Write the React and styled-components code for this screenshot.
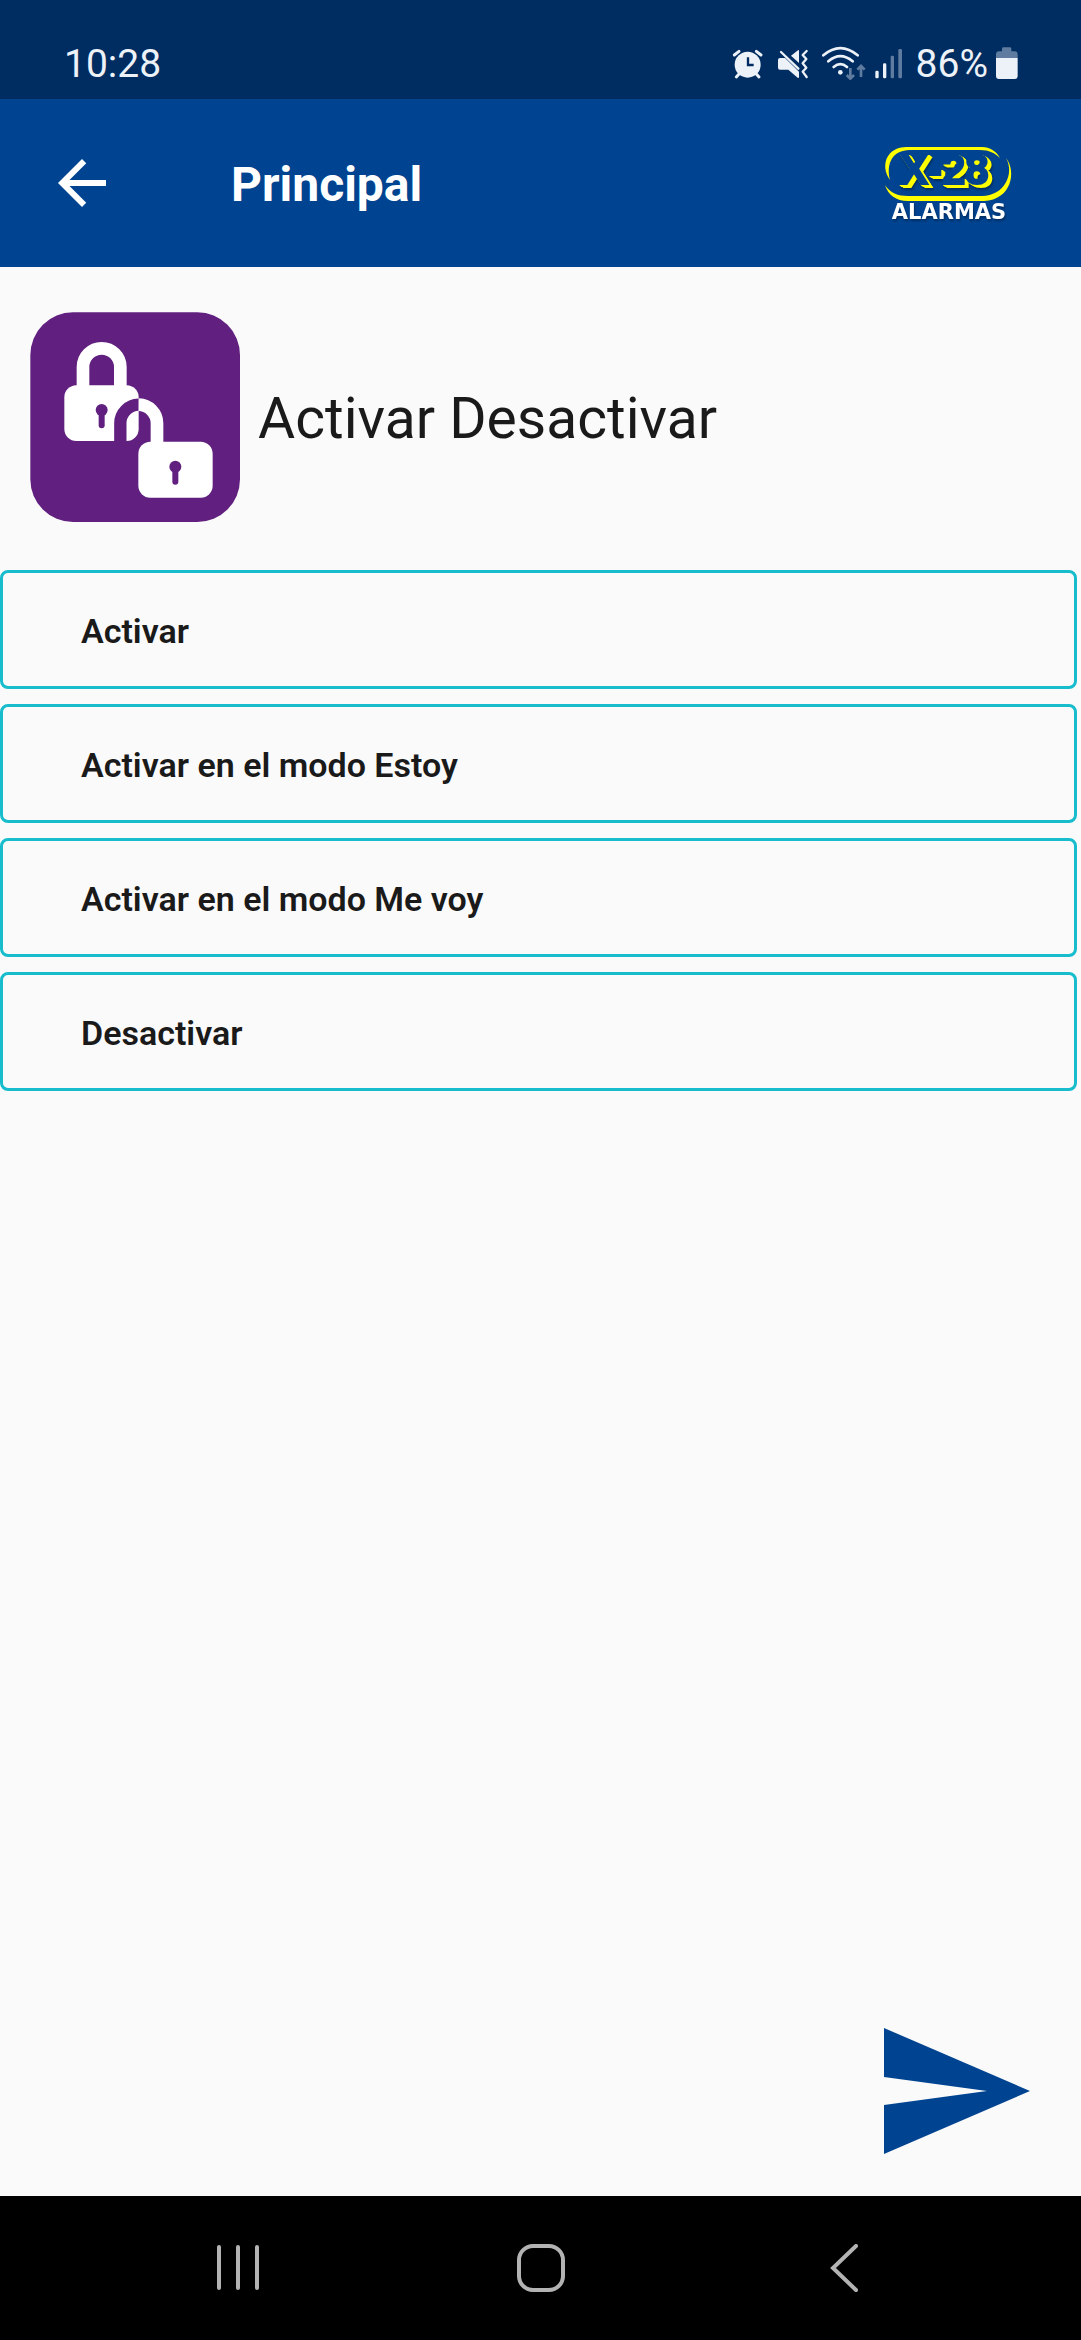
import React, { useState } from "react";
import styled, { createGlobalStyle } from "styled-components";

const GlobalStyle = createGlobalStyle`
  * {
    box-sizing: border-box;
  }
  body {
    margin: 0;
    background-color: #fafafa;
    font-family: Roboto, sans-serif;
    color: #1a1a1a;
  }
  button {
    margin: 0;
    padding: 0;
    border: none;
    background: none;
    font-family: inherit;
    color: inherit;
    cursor: pointer;
  }
  svg {
    display: block;
    flex-shrink: 0;
  }
`;

const Screen = styled.div`
  display: flex;
  flex-direction: column;
  min-height: 100vh;
`;

const StatusBar = styled.div`
  display: flex;
  align-items: flex-end;
  justify-content: space-between;
  height: 99px;
  padding: 0 63px 19px 64px;
  background-color: #002d61;
  color: #edf1f8;
`;

const StatusText = styled.span`
  padding-top: 2px;
  font-size: 39px;
  line-height: 32px;
`;

const StatusIcons = styled.div`
  display: flex;
  align-items: center;
  gap: 8px;
`;

const AppBar = styled.header`
  display: flex;
  align-items: center;
  height: 168px;
  padding: 0 41px 0 46px;
  background-color: #004491;
  color: #ffffff;
`;

const AppBarTitle = styled.h1`
  flex: 1;
  margin: 0;
  padding: 3px 0 0 113px;
  font-size: 48px;
  font-weight: 700;
  line-height: 56px;
`;

const BrandName = styled.text`
  font-family: "DejaVu Sans", sans-serif;
  font-size: 21px;
  font-weight: 700;
  fill: #ffffff;
  filter: drop-shadow(1px 2px 1px #002d61);
`;

const BrandModel = styled.text`
  font-family: "Liberation Sans", sans-serif;
  font-size: 42px;
  font-weight: 700;
  fill: #004491;
  stroke: #004491;
  stroke-width: 2px;
  filter: drop-shadow(1px 1px 0 #ffff00) drop-shadow(2px 1px 0 #ffff00)
    drop-shadow(1px 1px 0 #ffff00) drop-shadow(1px 2px 1px #002d61);
`;

const Main = styled.main`
  flex: 1;
  display: flex;
  flex-direction: column;
`;

const Heading = styled.div`
  display: flex;
  align-items: center;
  gap: 18px;
  padding: 45px 30px 48px;
`;

const HeadingText = styled.h2`
  margin: 0;
  padding-top: 3px;
  font-size: 57px;
  font-weight: 400;
  line-height: 68px;
`;

const OptionList = styled.div`
  display: flex;
  flex-direction: column;
  gap: 15px;
  padding-right: 4px;
`;

const Option = styled.button`
  height: 119px;
  padding: 3px 78px 0;
  border: 3px solid #17bccd;
  border-radius: 8px;
  background-color: ${(props) => (props.$selected ? "#d9f4f7" : "#fafafa")};
  font-size: 34px;
  font-weight: 600;
  line-height: 40px;
  text-align: left;
`;

const SendRow = styled.div`
  display: flex;
  justify-content: flex-end;
  margin-top: auto;
  padding: 0 51px 42px;
`;

const NavBar = styled.nav`
  display: grid;
  grid-template-columns: 1fr 1fr 1fr;
  height: 144px;
  padding: 0 86px;
  background-color: #000000;
`;

const NavButton = styled.button`
  display: flex;
  align-items: center;
  justify-content: center;
`;

function AlarmIcon() {
  return (
    <svg width="36" height="34" viewBox="93 78 108 102" fill="none">
      <circle cx="146" cy="134" r="39" fill="#edf1f8" />
      <path
        d="M106 105 L120 94 M186 105 L172 94 M112 171 L122 160 M180 171 L170 160"
        stroke="#edf1f8"
        strokeWidth="9"
        strokeLinecap="round"
      />
      <path d="M147 112 V135 H164" stroke="#002d61" strokeWidth="7" />
    </svg>
  );
}

function VibrateIcon() {
  return (
    <svg width="38" height="34" viewBox="225 78 114 102" fill="none">
      <path d="M276 107 L297 91 Q300 89 300 93 V129 Z" fill="#edf1f8" />
      <path
        d="M243 114 H258 L300 155 V171 Q300 175 296 173 L268 149 H243 Q237 149 237 143 V120 Q237 114 243 114 Z"
        fill="#edf1f8"
      />
      <path
        d="M246 96 L298 146"
        stroke="#edf1f8"
        strokeWidth="7"
        strokeLinecap="round"
      />
      <path
        d="M323 93 L311 105 L322 117 L311 130 L322 143 L311 155 L323 171"
        stroke="#edf1f8"
        strokeWidth="7"
        strokeLinecap="round"
        strokeLinejoin="round"
      />
    </svg>
  );
}

function WifiIcon() {
  return (
    <svg width="47" height="34" viewBox="363 78 141 102" fill="none">
      <path
        d="M373 106 Q424 63 476 106 M388 124 Q424 93 461 124 M404 141 Q424 124 444 141"
        stroke="#edf1f8"
        strokeWidth="8"
        strokeLinecap="round"
      />
      <circle cx="424" cy="157" r="7" fill="#edf1f8" />
      <path
        d="M454 144 V175 M443 165 L454 176 L465 165 M486 171 V139 M475 149 L486 138 L497 149"
        stroke="#5f7ba0"
        strokeWidth="8"
      />
    </svg>
  );
}

function SignalIcon() {
  return (
    <svg width="33" height="34" viewBox="528 78 99 102">
      <rect x="529" y="152" width="10" height="23" rx="4" fill="#edf1f8" />
      <rect x="552" y="130" width="10" height="45" rx="4" fill="#edf1f8" />
      <rect x="575" y="107" width="10" height="68" rx="4" fill="#5f7ba0" />
      <rect x="598" y="87" width="11" height="88" rx="4" fill="#5f7ba0" />
    </svg>
  );
}

function BatteryIcon() {
  return (
    <svg width="22" height="34" viewBox="888 78 66 102">
      <path
        d="M888 114 V103 Q888 94 897 94 H906 V86 Q906 82 910 82 H930 Q934 82 934 86 V94 H944 Q953 94 953 103 V114 Z"
        fill="#5f7ba0"
      />
      <path
        d="M888 114 H953 V168 Q953 177 944 177 H897 Q888 177 888 168 Z"
        fill="#edf1f8"
      />
    </svg>
  );
}

function ArrowBackIcon() {
  return (
    <svg width="72" height="72" viewBox="0 0 24 24" fill="currentColor">
      <path d="M20 11H7.83l5.59-5.59L12 4l-8 8 8 8 1.41-1.41L7.83 13H20v-2z" />
    </svg>
  );
}

function BrandLogo() {
  return (
    <svg width="180" height="110" viewBox="0 -2 180 110" role="img" aria-label="X-28 Alarmas">
      {/* the two open halves of the capsule */}
      <path
        d="M30 50 C20 36 26 17 47 17 H122 C130 17 136 21 140 28 C135 23 129 20 120 20 H50 C32 20 26 34 30 50 Z"
        fill="#ffff00"
      />
      <path
        d="M25 55 C30 63 38 66 48 66 H122 C144 66 155 44 146 28 C157 42 151 70 124 71 H48 C36 71 28 65 25 55 Z"
        fill="#ffff00"
      />
      <BrandModel x="40" y="54">
        X-28
      </BrandModel>
      <BrandName x="89" y="89" textAnchor="middle">
        ALARMAS
      </BrandName>
    </svg>
  );
}

function PadlocksIcon() {
  return (
    <svg width="210" height="210" viewBox="60 65 630 630" fill="none">
      <rect x="61" y="66" width="629" height="629" rx="128" fill="#61207f" />
      <path
        d="M219 300 V230 a56 56 0 0 1 112 0 V300"
        stroke="#ffffff"
        strokeWidth="38"
      />
      <rect x="163" y="285" width="223" height="167" rx="36" fill="#ffffff" />
      <circle cx="275" cy="359" r="18" fill="#61207f" />
      <path
        d="M275 360 V405"
        stroke="#61207f"
        strokeWidth="18"
        strokeLinecap="round"
      />
      <path
        d="M331 456 V399 a56 56 0 0 1 55 -56"
        stroke="#61207f"
        strokeWidth="37"
      />
      <path
        d="M386 343 a56 56 0 0 1 55 56 V470"
        stroke="#ffffff"
        strokeWidth="38"
      />
      <rect x="385" y="454" width="223" height="168" rx="36" fill="#ffffff" />
      <circle cx="496" cy="529" r="18" fill="#61207f" />
      <path
        d="M496 530 V574"
        stroke="#61207f"
        strokeWidth="18"
        strokeLinecap="round"
      />
    </svg>
  );
}

function SendIcon() {
  return (
    <svg width="147" height="126" viewBox="0 0 147 126" fill="#004491">
      <path d="M1 0 L147 63 L1 126 V77 L104 63 L1 49 Z" />
    </svg>
  );
}

function RecentsIcon() {
  return (
    <svg width="48" height="48" viewBox="0 0 48 48" stroke="#b3b3b3" strokeWidth="4" strokeLinecap="round">
      <path d="M5 3 V44 M24 3 V44 M43 3 V44" />
    </svg>
  );
}

function HomeIcon() {
  return (
    <svg width="48" height="48" viewBox="0 0 48 48" fill="none" stroke="#b3b3b3" strokeWidth="4">
      <rect x="2" y="2" width="44" height="44" rx="14" />
    </svg>
  );
}

function NavBackIcon() {
  return (
    <svg width="48" height="48" viewBox="0 0 48 48" fill="none" stroke="#b3b3b3" strokeWidth="4" strokeLinecap="round">
      <path d="M36 2 L13 24 L36 46" />
    </svg>
  );
}

const options = [
  "Activar",
  "Activar en el modo Estoy",
  "Activar en el modo Me voy",
  "Desactivar",
];

function App() {
  const [selected, setSelected] = useState(undefined);

  return (
    <Screen>
      <GlobalStyle />
      <StatusBar>
        <StatusText>10:28</StatusText>
        <StatusIcons>
          <AlarmIcon />
          <VibrateIcon />
          <WifiIcon />
          <SignalIcon />
          <StatusText>86%</StatusText>
          <BatteryIcon />
        </StatusIcons>
      </StatusBar>
      <AppBar>
        <button aria-label="Volver">
          <ArrowBackIcon />
        </button>
        <AppBarTitle>Principal</AppBarTitle>
        <BrandLogo />
      </AppBar>
      <Main>
        <Heading>
          <PadlocksIcon />
          <HeadingText>Activar Desactivar</HeadingText>
        </Heading>
        <OptionList>
          {options.map((option) => (
            <Option
              key={option}
              $selected={selected === option}
              onClick={() => setSelected(option)}
            >
              {option}
            </Option>
          ))}
        </OptionList>
        <SendRow>
          <button aria-label="Enviar">
            <SendIcon />
          </button>
        </SendRow>
      </Main>
      <NavBar>
        <NavButton aria-label="Recientes">
          <RecentsIcon />
        </NavButton>
        <NavButton aria-label="Inicio">
          <HomeIcon />
        </NavButton>
        <NavButton aria-label="Atrás">
          <NavBackIcon />
        </NavButton>
      </NavBar>
    </Screen>
  );
}

export default App;
